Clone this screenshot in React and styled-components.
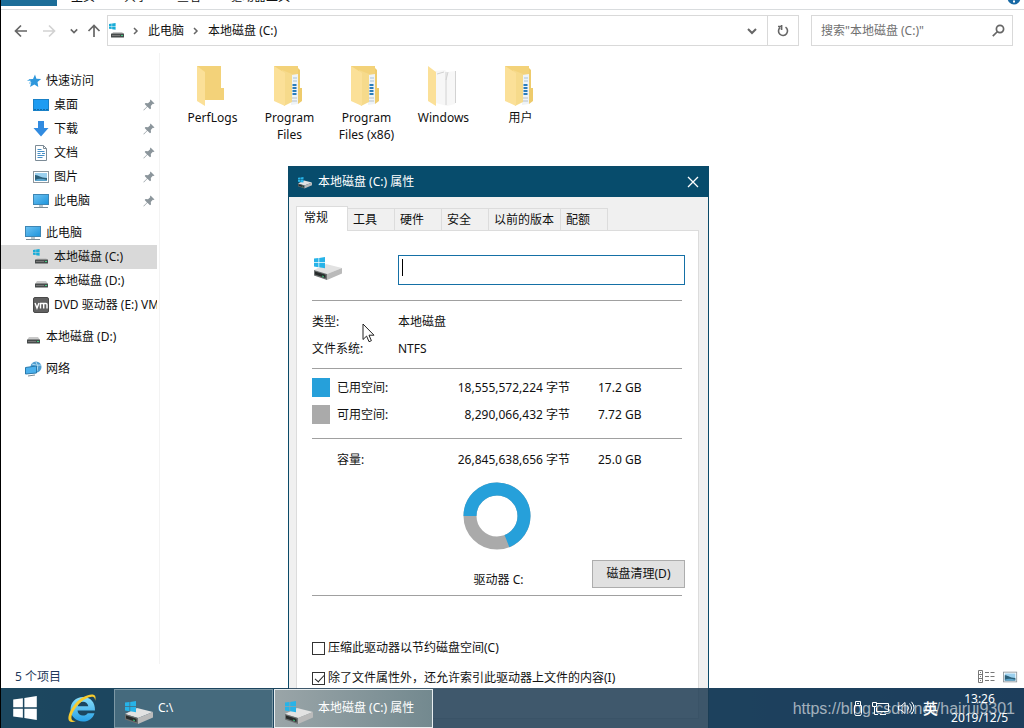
import React from 'react';
import styled, { createGlobalStyle } from 'styled-components';

const GlobalStyle = createGlobalStyle`
  * { box-sizing: border-box; }
  body {
    margin: 0;
    font: 12px/16px "Noto Sans", "Noto Sans CJK SC", sans-serif;
    color: #111;
  }
  button, input { font: inherit; color: inherit; }
  button { padding: 0; border: 0; background: none; }
  a { color: inherit; text-decoration: none; }
  svg { display: block; flex: none; }
`

const Screen = styled.div`
  position: relative;
  display: flex;
  flex-direction: column;
  height: 100vh;
  overflow: hidden;
  border-left: 1px solid #000;
  background: linear-gradient(90deg, #168caa, #1e5496);
`

const Explorer = styled.main`
  flex: 1;
  min-height: 0;
  display: flex;
  flex-direction: column;
  background: #fff;
`

/* ribbon */
const Ribbon = styled.div`
  display: flex;
  align-items: flex-end;
  height: 10px;
  padding-bottom: 3px;
  overflow: hidden;
  border-bottom: 1px solid #d9dcde;
`
const RibbonTab = styled.button`
  padding: 0 15px 1px 14px;
  white-space: nowrap;
`
const FileTab = styled.button`
  width: 56px;
  height: 16px;
  background: #1c6d98;
`
const HelpIcon = styled.svg`
  margin: 0 3px 1px auto;
`

/* address bar */
const AddressRow = styled.div`
  display: flex;
  align-items: center;
  padding: 5px 11px 7px 10px;
`
const ArrowButton = styled.button`
  display: flex;
  justify-content: center;
  width: ${({ $width }) => $width}px;
  color: ${({ disabled }) => (disabled ? '#d2d2d2' : '#666')};
`
const AddressBox = styled.div`
  flex: 1;
  display: flex;
  align-items: center;
  height: 31px;
  margin-right: 12px;
  border: 1px solid #d9d9d9;
  padding-left: 1px;
`
const Crumb = styled.a`
  padding: 0 9px;
`
const CrumbArrow = styled.svg`
  margin-left: ${({ $first }) => ($first ? '8px' : '0')};
`
const BoxButton = styled.button`
  display: flex;
  align-items: center;
  justify-content: center;
  width: 31px;
  height: 29px;
  color: #666;
  &:last-child { border-left: 1px solid #d9d9d9; }
  a + & { margin-left: auto; }
`
const SearchBox = styled.label`
  display: flex;
  align-items: center;
  width: 202px;
  height: 31px;
  padding: 0 7px 0 9px;
  border: 1px solid #d9d9d9;
  input {
    flex: 1;
    min-width: 0;
    padding: 0;
    border: 0;
    outline: 0;
    background: none;
  }
  input::placeholder { color: #707070; opacity: 1; }
`

/* body */
const Columns = styled.div`
  flex: 1;
  min-height: 0;
  display: flex;
`
const Sidebar = styled.nav`
  display: flex;
  flex-direction: column;
  gap: 8px;
  width: 159px;
  padding: 16px 2px 0 0;
  border-right: 1px solid #f3f3f3;
`
const NavItem = styled.a`
  display: flex;
  align-items: center;
  gap: 4px;
  height: 24px;
  padding-left: ${({ $sub }) => ($sub ? '32px' : '24px')};
  overflow: hidden;
  white-space: nowrap;
  background: ${({ $selected }) => ($selected ? '#d9d9d9' : 'none')};
`
const PinIcon = styled.svg`
  margin: 0 2px 0 auto;
`
const Files = styled.div`
  flex: 1;
  display: flex;
  align-items: flex-start;
  padding: 12px 0 0 14px;
`
const FileItem = styled.a`
  display: flex;
  flex-direction: column;
  align-items: center;
  gap: 2px;
  width: 77px;
  line-height: 17px;
  text-align: center;
  svg { margin-right: 6px; }
`
const StatusBar = styled.footer`
  display: flex;
  align-items: center;
  gap: 8px;
  height: 24px;
  padding: 1px 6px 0 14px;
  color: #1e395b;
  span { margin-right: auto; }
`

/* properties window */
const Dialog = styled.section`
  position: absolute;
  left: 287px;
  top: 166px;
  width: 421px;
  border: 1px solid #0b4a68;
  background: #f0f0f0;
`
const TitleBar = styled.header`
  display: flex;
  align-items: center;
  gap: 5px;
  height: 30px;
  padding: 0 9px 0 8px;
  background: #074c6c;
  color: #fff;
  button { margin-left: auto; }
`
const DialogBody = styled.div`
  padding: 9px 9px 50px 7px;
`
const Tabs = styled.div`
  display: flex;
  align-items: flex-end;
  height: 24px;
`
const Tab = styled.button`
  width: ${({ $wide }) => ($wide ? '72px' : '47px')};
  height: 22px;
  padding-left: 5px;
  text-align: left;
  white-space: nowrap;
  border: 1px solid #dcdcdc;
  border-width: 1px 1px 0 0;
  ${({ $active }) => $active && `
    position: relative;
    width: 52px;
    height: 25px;
    margin-bottom: -1px;
    padding: 0 0 3px 7px;
    border-left-width: 1px;
    background: #fff;
  `}
`
const Panel = styled.div`
  padding: 24px 13px 25px 15px;
  border: 1px solid #dcdcdc;
  background: #fff;
`
const VolumeRow = styled.div`
  display: grid;
  grid-template-columns: 86px 1fr;
`
const NameField = styled.label`
  position: relative;
  input {
    display: block;
    width: 100%;
    height: 30px;
    padding: 0 4px;
    border: 1px solid #1570a6;
    outline: 0;
    caret-color: transparent;
  }
`
const Caret = styled.i`
  position: absolute;
  left: 4px;
  top: 4px;
  width: 1px;
  height: 17px;
  background: #000;
`
const Rule = styled.hr`
  height: 1px;
  margin: ${({ $top }) => $top}px 3px 0 0;
  border: 0;
  background: #a0a0a0;
`
const Facts = styled.dl`
  display: grid;
  grid-template-columns: 86px 1fr;
  margin: 7px 0 0;
  line-height: 27px;
  dd { margin: 0; }
`
const SpaceTable = styled.table`
  margin-top: ${({ $top }) => $top}px;
  border-collapse: collapse;
  line-height: 27px;
  td, th {
    padding: 0;
    font-weight: normal;
    text-align: left;
    white-space: nowrap;
  }
  td:first-child { width: 25px; }
  th { width: 73px; }
  td:nth-child(3) { width: 160px; text-align: right; }
  td:nth-child(4) { padding-left: 28px; }
`
const Swatch = styled.div`
  width: 18px;
  height: 19px;
  background: ${({ $color }) => $color};
`
const Donut = styled.svg`
  width: calc(100% - 3px);
  height: 68px;
  margin-top: 9px;
`
const DriveRow = styled.div`
  display: grid;
  grid-template-columns: 1fr auto 1fr;
  align-items: end;
  margin-top: 10px;
  span { grid-column: 2; }
`
const PushButton = styled.button`
  justify-self: end;
  width: 93px;
  height: 28px;
  border: 1px solid #adadad;
  background: #e1e1e1;
`
const Options = styled.div`
  margin-top: 37px;
`
const Option = styled.label`
  display: flex;
  align-items: center;
  gap: 3px;
  height: 30px;
  input {
    appearance: none;
    position: relative;
    width: 13px;
    height: 13px;
    margin: 0;
    border: 1px solid #333;
    background: #fff;
  }
  input:checked::after {
    content: '';
    position: absolute;
    left: 4px;
    top: 0;
    width: 4px;
    height: 8px;
    border: solid #222;
    border-width: 0 1px 1px 0;
    transform: rotate(42deg);
  }
`
const Pointer = styled.svg`
  position: absolute;
  left: 361px;
  top: 323px;
`

/* taskbar */
const Taskbar = styled.footer`
  position: relative;
  display: flex;
  align-items: center;
  height: 40px;
  padding-right: 16px;
  background: rgba(29, 59, 82, 0.85);
  color: #fff;
`
const LaunchButton = styled.button`
  display: flex;
  justify-content: center;
  width: ${({ $first }) => ($first ? '48px' : '65px')};
`
const Task = styled.button`
  display: flex;
  align-items: center;
  gap: 3px;
  width: 159px;
  height: 39px;
  margin-right: 1px;
  padding-left: 8px;
  border: 1px solid ${({ $active }) => ($active ? '#e8eef0' : '#7c98a5')};
  background: ${({ $active }) => ($active ? 'linear-gradient(90deg, #9aa5a8, #73898f)' : '#456a7d')};
  svg { margin-top: 7px; }
`
const Tray = styled.div`
  display: flex;
  align-items: center;
  gap: 8px;
  margin-left: auto;
`
const InputMode = styled.span`
  font-size: 15px;
  font-weight: 500;
`
const Clock = styled.time`
  margin-left: 5px;
  line-height: 19px;
  text-align: center;
`
const Watermark = styled.span`
  position: absolute;
  right: 9px;
  top: 11px;
  font: 16px/20px "Liberation Sans", sans-serif;
  color: rgba(255, 255, 255, 0.6);
`

const WinLogo = ({ color = '#27b3e8' }) => (
  <path d="M0 1.6 4.5 1v4.2H0zM5.2.9 11 0v5.2H5.2zM0 6h4.5v4.2L0 9.6zM5.2 6H11v5.2l-5.8-.9z" fill={color} />
)

const DriveIcon = ({ width, height }) => (
  <svg width={width} height={height} viewBox="0 0 32 26">
    <path d="M2 15 14 9l16 4-15 6z" fill="#e2e2e2" />
    <path d="M2 15l13 4v6L2 20.500z" fill="#6b6f70" />
    <path d="M3 16.500l10.500 3.300v3.200L3 19.500z" fill="#262a2a" />
    <path d="M10 20.500l2 .6v1.200l-2-.6z" fill="#35a86b" />
    <path d="M15 19l15-6v5.500L15 25z" fill="#bababa" />
    <g transform="translate(2 2)"><WinLogo /></g>
  </svg>
)

const SmallDrive = ({ system, width = 17 }) => (
  <svg width={width} height="16" viewBox={`0 0 ${width} 16`}>
    {system && <g transform="scale(.6)"><WinLogo color="#18acd8" /></g>}
    <path d={system ? 'M4 9h9l2 2H3z' : 'M4 8h9l2 3H2z'} fill="#c9c9c9" />
    <rect x="2" y="10.500" width="13" height="4" rx=".5" fill="#464b4b" />
    <path d="M3 12.500h8" stroke="#777" />
    <path d="M12 12.500h2" stroke="#42cf83" />
  </svg>
)

const ComputerIcon = () => (
  <svg width="17" height="16" viewBox="0 0 17 16">
    <defs>
      <linearGradient id="screen" x2="1" y2="1">
        <stop stopColor="#6fc3f2" /><stop offset="1" stopColor="#1c94dc" />
      </linearGradient>
    </defs>
    <rect x=".5" y="1.500" width="15" height="10" fill="url(#screen)" stroke="#3d86b4" />
    <path d="M6 12h4v2H6z" fill="#b9c4ca" />
    <path d="M1 14.500h14" stroke="#7a8b95" />
  </svg>
)

const StarIcon = () => (
  <svg width="17" height="16" viewBox="0 0 17 16">
    <path d="M10 1.500l1.400 4.300 4.800.2-3.700 3 .8 4.900L9.400 11.400 5 14l1.300-4.600L3.500 6.300l4.500-.4z" fill="#2e97dc" />
    <path d="M2.500 7.500h3M4 10h2" stroke="#72bdea" />
  </svg>
)

const DesktopIcon = () => (
  <svg width="17" height="16" viewBox="0 0 17 16">
    <rect x=".5" y="2.500" width="15" height="11" fill="#1e9cf2" stroke="#1980c6" />
    <path d="M1 12.500h14" stroke="#116ba9" strokeDasharray="2 1" />
  </svg>
)

const DownloadIcon = () => (
  <svg width="17" height="16" viewBox="0 0 17 16">
    <path d="M5 0h6v7h4.500L8 15.500.5 7H5z" fill="#318be0" />
  </svg>
)

const DocumentIcon = () => (
  <svg width="17" height="16" viewBox="0 0 17 16">
    <path d="M2.500.5h8l3 3v12h-11z" fill="#fff" stroke="#7c8b96" />
    <path d="M10.500.5v3h3" fill="none" stroke="#7c8b96" />
    <path d="M4.500 4.500h4M4.500 6.500h7M4.500 8.500h3M9 8.500h3M4.500 10.500h7M4.500 12.500h5" stroke="#468fc6" />
  </svg>
)

const PictureIcon = ({ width = 17 }) => (
  <svg width={width} height="16" viewBox="0 0 17 16">
    <rect x=".5" y="2.500" width="15" height="11" fill="#fff" stroke="#8d979e" />
    <path d="M2 4h12v8H2z" fill="#9bd0ee" />
    <path d="M2 6c4 0 5 3 12 3v3H2z" fill="#2c6079" />
    <path d="M2 11c4-2 8-1 12 0v1H2z" fill="#5ba4cc" />
  </svg>
)

const VmIcon = () => (
  <svg width="17" height="16" viewBox="0 0 17 16">
    <rect x=".5" y=".5" width="15" height="15" rx="1.500" fill="#616161" stroke="#494949" />
    <path d="M2 6l2 5 2-5M7.500 11.500V6.500H13q1 0 1 1v4M10.700 6.500v5" fill="none" stroke="#fff" strokeWidth="1.400" />
  </svg>
)

const NetworkIcon = () => (
  <svg width="17" height="16" viewBox="0 0 17 16">
    <circle cx="11" cy="6" r="5.500" fill="#4d9ccf" />
    <path d="M7 3q4 2 9 1M11 1q3 4 1 9" fill="none" stroke="#b4dcf1" />
    <path d="M.5 6.500 11.500 5v7l-11 1z" fill="#4bb0ec" stroke="#2879ab" />
    <path d="M3 15l7-1" stroke="#7a8b95" />
  </svg>
)

const Pin = () => (
  <PinIcon width="12" height="12" viewBox="0 0 12 12">
    <path d="M7.500.5l4 4-1.200.5-.5-.2-2 2.200.2 2.500-1 .8-2.600-2.600L.8 11.500l-.4-.4L4 7.500 1.700 5l.8-1 2.500.2 2.200-2L7 1.600z" fill="#8b959b" />
  </PinIcon>
)

const FolderIcon = ({ kind }) => (
  <svg width="32" height="42" viewBox="0 0 32 42">
    {kind !== 'pages' && <path d="M3 1h24v22h3v12H3z" fill="#f3d279" />}
    {kind === 'pages' && (
      <>
        <path d="M10 6l10-1 2 2 9-1-1 33-8 2-11-3z" fill="#f7f7f7" />
        <path d="M21 7v33M21 15l2-8M30.500 6v32M12 9l7-2" fill="none" stroke="#d2d2d2" />
      </>
    )}
    {kind === 'full' && (
      <>
        <path d="M27 3l2 2v18h2v13l-4 3z" fill="#eecb6c" />
        <path d="M20 10l7-1v30l-7 1z" fill="#eef3f7" />
        <path d="M22 13h4M22 16h4" stroke="#a7c3d8" />
        <path d="M23.500 19v11" stroke="#2b7dbb" strokeWidth="4" strokeDasharray="2 1" />
        <path d="M21 33h5M21 36h5" stroke="#b8c1c8" />
        <path d="M11 5l10 4v28l-8 4z" fill="#f6da8b" />
      </>
    )}
    <path d={kind === 'full' ? 'M3 1l11 7v33L3 36z' : 'M3 1l8 6v34l-8-5z'} fill="#fbe098" />
  </svg>
)

const quickAccess = [
  { name: '桌面', icon: <DesktopIcon /> },
  { name: '下载', icon: <DownloadIcon /> },
  { name: '文档', icon: <DocumentIcon /> },
  { name: '图片', icon: <PictureIcon /> },
  { name: '此电脑', icon: <ComputerIcon /> },
];

const folders = [
  { name: 'PerfLogs', kind: 'empty' },
  { name: 'Program Files', kind: 'full' },
  { name: 'Program Files (x86)', kind: 'full' },
  { name: 'Windows', kind: 'pages' },
  { name: '用户', kind: 'full' },
];

const ribbonTabs = ['主页', '共享', '查看', '驱动器工具'];
const tabs = ['常规', '工具', '硬件', '安全', '以前的版本', '配额'];

const USED = '#26a0da';
const FREE = '#aaaaaa';

const spaces = [
  { label: '已用空间:', bytes: '18,555,572,224 字节', size: '17.2 GB', color: USED },
  { label: '可用空间:', bytes: '8,290,066,432 字节', size: '7.72 GB', color: FREE },
];

const Chevron = ({ size = 10 }) => (
  <svg width={size} height={size} viewBox="0 0 10 10" fill="none" stroke="currentColor" strokeWidth="2">
    <path d="M1 3l4 4 4-4" />
  </svg>
)

const Arrow = ({ turn = 0 }) => (
  <svg width="14" height="14" viewBox="0 0 14 14" fill="none" stroke="currentColor" strokeWidth="1.700">
    <path d="M13 7H1.500M7 1.500 1.500 7 7 12.500" transform={`rotate(${turn} 7 7)`} />
  </svg>
)

const CrumbSep = ({ first }) => (
  <CrumbArrow $first={first} width="6" height="8" viewBox="0 0 6 8" fill="none" stroke="#666" strokeWidth="1.500">
    <path d="M1 1l3 3-3 3" />
  </CrumbArrow>
)

const AddressBar = () => (
  <AddressRow>
    <ArrowButton aria-label="后退" $width={20}><Arrow /></ArrowButton>
    <ArrowButton aria-label="前进" $width={36} disabled><Arrow turn={180} /></ArrowButton>
    <ArrowButton aria-label="最近" $width={14}><Chevron size={8} /></ArrowButton>
    <ArrowButton aria-label="向上" $width={26}><Arrow turn={90} /></ArrowButton>
    <AddressBox>
      <SmallDrive system width={16} />
      <CrumbSep first />
      <Crumb href="#pc">此电脑</Crumb>
      <CrumbSep />
      <Crumb href="#c">本地磁盘 (C:)</Crumb>
      <BoxButton aria-label="展开"><Chevron /></BoxButton>
      <BoxButton aria-label="刷新">
        <svg width="12" height="13" viewBox="0 0 12 13" fill="none" stroke="currentColor" strokeWidth="1.600">
          <path d="M8.500 3.200A4.500 4.500 0 1 1 3 3.600M1 2.500h4.200M4.600 1v5" />
        </svg>
      </BoxButton>
    </AddressBox>
    <SearchBox>
      <input aria-label="搜索" placeholder={'搜索"本地磁盘 (C:)"'} />
      <svg width="13" height="13" viewBox="0 0 13 13" fill="none" stroke="#666" strokeWidth="1.700">
        <circle cx="8" cy="5" r="3.600" /><path d="M5.500 7.500.8 12.200" />
      </svg>
    </SearchBox>
  </AddressRow>
)

const Navigation = () => (
  <Sidebar>
    <div>
      <NavItem href="#quick"><StarIcon />快速访问</NavItem>
      {quickAccess.map((item) => (
        <NavItem href="#item" key={item.name} $sub>{item.icon}{item.name}<Pin /></NavItem>
      ))}
    </div>
    <div>
      <NavItem href="#pc"><ComputerIcon />此电脑</NavItem>
      <NavItem href="#c" $sub $selected><SmallDrive system />本地磁盘 (C:)</NavItem>
      <NavItem href="#d" $sub><SmallDrive />本地磁盘 (D:)</NavItem>
      <NavItem href="#e" $sub><VmIcon />DVD 驱动器 (E:) VM</NavItem>
    </div>
    <NavItem href="#d"><SmallDrive />本地磁盘 (D:)</NavItem>
    <NavItem href="#network"><NetworkIcon />网络</NavItem>
  </Sidebar>
)

const SpaceRow = ({ label, bytes, size, color }) => (
  <tr>
    <td>{color && <Swatch $color={color} />}</td>
    <th scope="row">{label}</th>
    <td>{bytes}</td>
    <td>{size}</td>
  </tr>
)

const Properties = () => (
  <Dialog role="dialog" aria-label="本地磁盘 (C:) 属性">
    <TitleBar>
      <DriveIcon width={16} height={13} />
      本地磁盘 (C:) 属性
      <button aria-label="关闭">
        <svg width="12" height="12" viewBox="0 0 12 12" stroke="#fff" strokeWidth="1.300"><path d="M1 1l10 10M11 1 1 11" /></svg>
      </button>
    </TitleBar>
    <DialogBody>
      <Tabs role="tablist">
        {tabs.map((name, i) => (
          <Tab role="tab" key={name} aria-selected={i === 0} $active={i === 0} $wide={name.length > 2}>{name}</Tab>
        ))}
      </Tabs>
      <Panel role="tabpanel">
        <VolumeRow>
          <DriveIcon width={32} height={26} />
          <NameField>
            <input aria-label="卷标" defaultValue="" />
            <Caret />
          </NameField>
        </VolumeRow>
        <Rule $top={15} />
        <Facts>
          <dt>类型:</dt><dd>本地磁盘</dd>
          <dt>文件系统:</dt><dd>NTFS</dd>
        </Facts>
        <Rule $top={6} />
        <SpaceTable $top={5}>
          <tbody>{spaces.map((s) => <SpaceRow key={s.label} {...s} />)}</tbody>
        </SpaceTable>
        <Rule $top={10} />
        <SpaceTable $top={7}>
          <tbody><SpaceRow label="容量:" bytes="26,845,638,656 字节" size="25.0 GB" /></tbody>
        </SpaceTable>
        <Donut viewBox="0 0 68 68" fill="none" strokeWidth="13">
          <circle cx="34" cy="34" r="27" stroke={FREE} />
          <circle cx="34" cy="34" r="27" stroke={USED} pathLength="100" strokeDasharray="69 31" transform="rotate(180 34 34)" />
        </Donut>
        <DriveRow>
          <span>驱动器 C:</span>
          <PushButton>磁盘清理(D)</PushButton>
        </DriveRow>
        <Rule $top={7} />
        <Options>
          <Option><input type="checkbox" />压缩此驱动器以节约磁盘空间(C)</Option>
          <Option><input type="checkbox" defaultChecked />除了文件属性外，还允许索引此驱动器上文件的内容(I)</Option>
        </Options>
      </Panel>
    </DialogBody>
  </Dialog>
)

const IeIcon = () => (
  <svg width="32" height="32" viewBox="0 0 32 32">
    <defs>
      <linearGradient id="ie" x2="0" y2="1">
        <stop stopColor="#8be0fb" /><stop offset="1" stopColor="#27a0e6" />
      </linearGradient>
    </defs>
    <path d="M29 18.500H11.500c.3 3.200 2.600 5 5.500 5 2.200 0 3.700-.8 4.700-2.300h6.800c-1.500 5-5.700 8.300-11.500 8.300-7 0-12.500-4.900-12.500-12.200C4.500 10 10 5 17 5c7.500 0 12.300 5.300 12 13.500zM11.700 14.300h10.600c-.4-2.700-2.500-4.500-5.300-4.500s-4.900 1.800-5.300 4.500z" fill="url(#ie)" />
    <path d="M29 9c1-3 .8-5.200-1-6C24 1.300 15 5 9 12 3 19 .8 27 3.600 29.300c1.400 1.200 4 .8 6.800-.6-2.500.4-4 .2-4.600-1.200C4.500 24.500 7 18.500 12 13 17.500 7 24.500 3.800 27.300 5c1.300.6 1.900 1.900 1.700 4z" fill="#f7cb2e" />
  </svg>
)

const Desk = () => (
  <Taskbar>
    <LaunchButton aria-label="开始" $first>
      <svg width="24" height="24" viewBox="0 0 11 11.200"><WinLogo color="#fff" /></svg>
    </LaunchButton>
    <LaunchButton aria-label="Internet Explorer"><IeIcon /></LaunchButton>
    <Task><DriveIcon width={32} height={26} />C:\</Task>
    <Task $active><DriveIcon width={32} height={26} />本地磁盘 (C:) 属性</Task>
    <Tray>
      <svg width="12" height="17" viewBox="0 0 12 17" fill="none" stroke="#fff">
        <path d="M3.500 5.500v-4h5v4M2.500 5.500h7v8l-1 2h-5l-1-2zM5 3.500h2" />
      </svg>
      <svg width="17" height="15" viewBox="0 0 17 15" fill="none" stroke="#fff">
        <path d="M5 2.500h11.500v8H4.500v-4M8 13.500h6M.5 1.500h4v4h-4zM2.500 5.500v8H6" />
      </svg>
      <svg width="18" height="14" viewBox="0 0 18 14" fill="none" stroke="#fff">
        <path d="M1.500 5v4H4l4 3.500v-11L4 5zM10.500 4.500q2 2.500 0 5M12.500 2.500q4 4.500 0 9M14.500.8q5 6 0 12.400" />
      </svg>
      <InputMode>英</InputMode>
      <Clock>13:26<br />2019/12/5</Clock>
    </Tray>
    <Watermark>https://blog.csdn.net/hairui9301</Watermark>
  </Taskbar>
)

const App = () => {
  return (
    <Screen>
      <GlobalStyle />
      <Explorer>
        <Ribbon>
          <FileTab aria-label="文件" />
          {ribbonTabs.map((name) => <RibbonTab key={name}>{name}</RibbonTab>)}
          <HelpIcon width="14" height="14" viewBox="0 0 14 14">
            <circle cx="7" cy="7" r="6.500" fill="#1769a5" />
            <path d="M7 9.500v2" stroke="#fff" strokeWidth="2" />
          </HelpIcon>
        </Ribbon>
        <AddressBar />
        <Columns>
          <Navigation />
          <Files>
            {folders.map((f) => (
              <FileItem href="#folder" key={f.name}><FolderIcon kind={f.kind} />{f.name}</FileItem>
            ))}
          </Files>
        </Columns>
        <StatusBar>
          <span>5 个项目</span>
          <svg width="17" height="14" viewBox="0 0 17 14" fill="none" stroke="#777">
            <path d="M.5.5h4v12h-4zM.5 4.500h4M.5 8.500h4M7 2.500h4M12.500 2.500h4M7 6.500h4M12.500 6.500h4M7 10.500h4M12.500 10.500h4M2 2.500h1M2 6.500h1M2 10.500h1" />
          </svg>
          <PictureIcon width={15} />
        </StatusBar>
      </Explorer>
      <Properties />
      <Pointer width="13" height="20" viewBox="0 0 13 20">
        <path d="M1 1v15.500l3.600-3.400 2.400 5.600 2.400-1-2.400-5.500h5z" fill="#fff" stroke="#222" />
      </Pointer>
      <Desk />
    </Screen>
  )
}

export default App;
